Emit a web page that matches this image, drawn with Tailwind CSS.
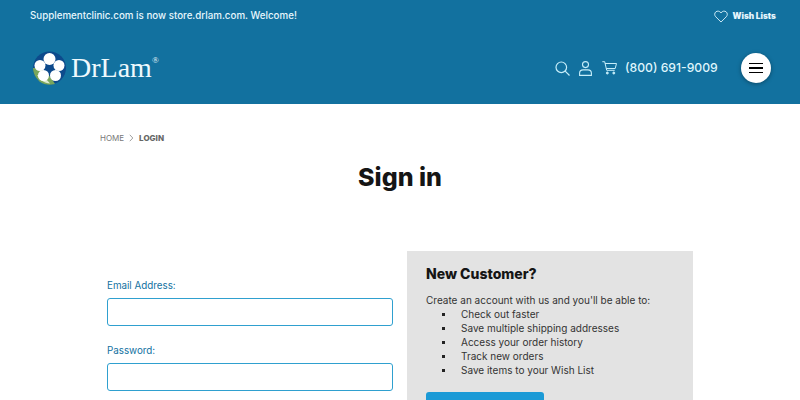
<!DOCTYPE html>
<html lang="en">
<head>
    <meta charset="UTF-8">
    <title>Sign in - DrLam</title>
    <script src="https://cdn.jsdelivr.net/npm/@tailwindcss/browser@4"></script>
</head>
<body class="bg-white h-[400px] overflow-hidden font-['Inter',sans-serif]">
    <header class="bg-[#12719f] h-[104px] text-white">
        <div class="flex items-center justify-between h-[32px] pl-[30px] pr-[24px]">
            <p class="text-[9.750px] font-medium text-[#e6f6fd]">Supplementclinic.com is now store.drlam.com. Welcome!</p>
            <a href="#" class="flex items-center gap-[4px] text-[8.300px] font-black text-[#e6f6fd]">
                <svg width="14" height="13" viewBox="0 0 24 22" fill="none" stroke="#d8f2fb" stroke-width="1.6"><path d="M12 20.500 3 11.500C.5 9 .7 5 3.200 3c2.600-2 6.400-1.500 8.800 1.800C14.400 1.500 18.200 1 20.800 3c2.500 2 2.700 6 .2 8.500Z"/></svg>
                Wish Lists
            </a>
        </div>
        <div class="flex items-center justify-between h-[72px] pl-[32px] pr-[29px]">
            <a href="#" class="flex items-center gap-[4px] -mt-[1px]">
                <svg width="35" height="34" viewBox="0 0 35 34">
                    <circle cx="17.500" cy="17" r="16.500" fill="#0d4a8c"/>
                    <path d="M1 17c8-1 16 5 22 16-5 1.500-11 1-15.500-2.500C3.500 27 1 22 1 17Z" fill="#79a65c"/>
                    <path d="M5 24c5 1 10 4 13 8.500-6 0-10-4-13-8.500Z" fill="#dfe9cf"/>
                    <g fill="#fff">
                        <ellipse cx="17.500" cy="8" rx="6" ry="6"/>
                        <ellipse cx="8" cy="14.500" rx="5.500" ry="5.500"/>
                        <ellipse cx="27" cy="14.500" rx="5.500" ry="5.500"/>
                        <ellipse cx="11.500" cy="24.500" rx="5.500" ry="5.500"/>
                        <ellipse cx="23.500" cy="24.500" rx="5.500" ry="5.500"/>
                    </g>
                    <circle cx="17.500" cy="17" r="2.800" fill="#0d4a8c"/>
                </svg>
                <span class="relative font-['Liberation_Serif',serif] text-[28px] leading-none text-[#eef9fd]">DrLam<span class="absolute -right-[7px] top-[2px] text-[9px]">®</span></span>
            </a>
            <div class="flex items-center">
                <svg class="mr-[9px]" width="15" height="15" viewBox="0 0 15 15" fill="none" stroke="#c6eefa" stroke-width="1.200"><circle cx="6.300" cy="6.300" r="5.300"/><path d="m10.200 10.200 4.300 4.300"/></svg>
                <svg class="mr-[10px]" width="13" height="15" viewBox="0 0 13 15" fill="none" stroke="#c6eefa" stroke-width="1.100"><circle cx="6.500" cy="3.600" r="3"/><path d="M.6 14.400v-2.200c0-2 1.600-3.300 3.500-3.300h4.800c1.900 0 3.500 1.300 3.500 3.300v2.200Z"/></svg>
                <svg class="mr-[8px]" width="15" height="14" viewBox="0 0 15 14" fill="none" stroke="#c6eefa" stroke-width="1"><path d="M.3.700h2.400l2 8.600h8M3 2.500h11.500l-1.300 5H4.200"/><circle cx="5.300" cy="12" r="1" fill="#c6eefa"/><circle cx="11.800" cy="12" r="1" fill="#c6eefa"/></svg>
                <a href="#" class="text-[12.200px] font-medium text-[#dff5fc] mr-[23px] w-[93px] whitespace-nowrap">(800) 691-9009</a>
                <button class="w-[30px] h-[30px] rounded-full bg-white flex flex-col items-center justify-center gap-[3px] shadow-[0_1px_4px_rgba(0,0,0,0.35)]">
                    <span class="block w-[14px] h-[1.500px] bg-black"></span>
                    <span class="block w-[14px] h-[1.500px] bg-black"></span>
                    <span class="block w-[14px] h-[1.500px] bg-black"></span>
                </button>
            </div>
        </div>
    </header>

    <main class="w-[600px] ml-[100px]">
        <nav class="flex items-center pt-[26px] h-[41px] text-[8px] text-[#777]">
            <a href="#">HOME</a>
            <svg class="mx-[5px]" width="5" height="8" viewBox="0 0 5 8" fill="none" stroke="#888" stroke-width=".8"><path d="m.8.800 3 3.200-3 3.200"/></svg>
            <span class="font-extrabold text-[#666]">LOGIN</span>
        </nav>
        <h1 class="text-center text-[25px] font-extrabold leading-[38px] mt-[13px] text-[#151515]">Sign in</h1>

        <div class="flex mt-[55px]">
            <form class="w-[286px] ml-[7px] pt-[28px]">
                <label for="email" class="block text-[9.800px] leading-[14px] text-[#12719f] mb-[5px]">Email Address:</label>
                <input id="email" type="email" class="block w-full h-[28px] border border-[#2fa0cf] rounded-[3px] mb-[18px]">
                <label for="password" class="block text-[9.800px] leading-[14px] text-[#12719f] mb-[5px]">Password:</label>
                <input id="password" type="password" class="block w-full h-[28px] border border-[#2fa0cf] rounded-[3px]">
            </form>
            <aside class="w-[286px] ml-[14px] bg-[#e3e3e3] pl-[19px] pt-[14px] h-[149px] overflow-hidden">
                <h2 class="text-[14px] leading-[18px] font-extrabold text-[#151515] mb-[10px]">New Customer?</h2>
                <p class="text-[10px] leading-[14px] text-[#333]">Create an account with us and you'll be able to:</p>
                <ul class="pl-[35px] text-[10px] leading-[14px] text-[#333]">
                    <li class="relative">Check out faster<span class="absolute -left-[19px] top-[6px] w-[2.500px] h-[2.500px] bg-[#222]"></span></li>
                    <li class="relative">Save multiple shipping addresses<span class="absolute -left-[19px] top-[6px] w-[2.500px] h-[2.500px] bg-[#222]"></span></li>
                    <li class="relative">Access your order history<span class="absolute -left-[19px] top-[6px] w-[2.500px] h-[2.500px] bg-[#222]"></span></li>
                    <li class="relative">Track new orders<span class="absolute -left-[19px] top-[6px] w-[2.500px] h-[2.500px] bg-[#222]"></span></li>
                    <li class="relative">Save items to your Wish List<span class="absolute -left-[19px] top-[6px] w-[2.500px] h-[2.500px] bg-[#222]"></span></li>
                </ul>
                <button class="block w-[118px] h-[40px] mt-[15px] bg-[#1b9ad6] rounded-[3px]"></button>
            </aside>
        </div>
    </main>
</body>
</html>
